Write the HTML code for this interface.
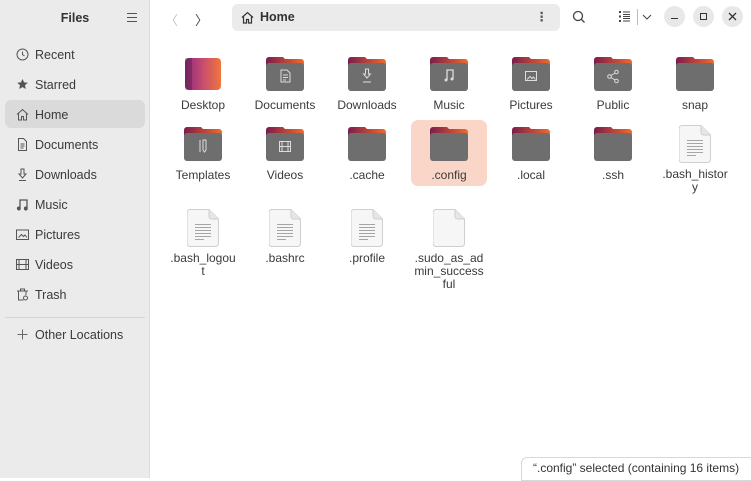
<!DOCTYPE html>
<html><head><meta charset="utf-8"><style>
*{margin:0;padding:0;box-sizing:border-box}
body{width:751px;height:478px;overflow:hidden;font-family:"Liberation Sans","DejaVu Sans",sans-serif;background:#fff;color:#333;position:relative}
.side{position:absolute;left:0;top:0;width:150px;height:478px;background:#ebebeb;border-right:1px solid #dcdcdc}
.title{position:absolute;top:11px;left:0;width:150px;text-align:center;font-weight:bold;font-size:12.5px;color:#333}
.ham{position:absolute;left:127px;top:13px;width:10px}
.ham i{display:block;height:1px;background:#555;margin-bottom:3px}
.it{position:absolute;left:5px;width:140px;height:28px;font-size:12.5px;line-height:30px;padding-left:30px;color:#3a3a3a}
.it svg{position:absolute;left:11px;top:8px}
.sel{background:#dadada;border-radius:6px}
.sep{position:absolute;left:5px;width:140px;top:317px;height:1px;background:#d6d6d6}
.main{position:absolute;left:150px;top:0;right:0;bottom:0}
.path{position:absolute;left:232px;top:4px;width:328px;height:27px;background:#ebebeb;border-radius:6px;font-weight:bold;font-size:12.5px;line-height:27px;padding-left:28px}
.ic{position:absolute;width:82px;text-align:center;font-size:12px;line-height:13px;color:#3a3a3a}
.ic svg{display:block;margin:0 auto 8px}
.wb{position:absolute;top:6px;width:21px;height:21px;border-radius:50%;background:#e8e8e8}
.status{position:absolute;left:521px;top:457px;width:232px;height:24px;border:1px solid #d8d8d8;border-radius:6px 0 0 0;background:#fff;font-size:12px;line-height:21px;padding-left:11px}
</style></head><body>
<svg width="0" height="0" style="position:absolute"><defs>
<linearGradient id="g" x1="0" x2="1"><stop offset="0" stop-color="#7b1c4c"/><stop offset="1" stop-color="#ef6a2c"/></linearGradient>
<linearGradient id="d" x1="0" x2="1"><stop offset="0" stop-color="#8d2a7a"/><stop offset=".5" stop-color="#c74d70"/><stop offset="1" stop-color="#f0763c"/></linearGradient>
<symbol id="fo" viewBox="0 0 38 34"><path d="M3 0h14l2 2h16a3 3 0 0 1 3 3v8H0V3a3 3 0 0 1 3-3z" fill="url(#g)"/><rect x="0" y="6" width="38" height="28" rx="3" fill="#6e6e6e"/></symbol>
<symbol id="fi" viewBox="0 0 32 38"><path d="M3 .5h19l9.5 9.5v24.5a3 3 0 0 1-3 3h-25.5a3 3 0 0 1-3-3v-31a3 3 0 0 1 3-3z" fill="#f6f6f6" stroke="#cfcfcf"/><path d="M22 .5v7a2.5 2.5 0 0 0 2.5 2.5h7" fill="#e6e6e6" stroke="#cfcfcf"/></symbol>
<symbol id="ln" viewBox="0 0 32 38"><g stroke="#a5a5a5" stroke-width="1"><path d="M8 15.5h16M8 18.5h16M8 21.5h16M8 24.5h16M8 27.5h16M8 30.5h9"/></g></symbol>
</defs></svg>

<div class="side">
<div class="title">Files</div>
<div class="ham"><i></i><i></i><i></i></div>
<div class="it" style="top:40px"><svg width="13" height="13" viewBox="0 0 13 13" fill="none" stroke="#555"><circle cx="6.5" cy="6.5" r="5.5"/><path d="M6.5 3.5v3l2 1.5"/></svg>Recent</div>
<div class="it" style="top:70px"><svg width="13" height="13" viewBox="0 0 13 13"><path d="M6.5 1l1.6 3.4 3.7.4-2.8 2.5.8 3.7-3.3-1.9-3.3 1.9.8-3.7L1.2 4.8l3.7-.4z" fill="#555"/></svg>Starred</div>
<div class="it sel" style="top:100px"><svg width="13" height="13" viewBox="0 0 13 13" fill="none" stroke="#555"><path d="M1 6.5L6.5 1.5 12 6.5M2.5 5.5v6.5h3v-3.5h2v3.5h3V5.5"/></svg>Home</div>
<div class="it" style="top:130px"><svg width="13" height="13" viewBox="0 0 13 13" fill="none" stroke="#555"><path d="M2.5 .5h5l3 3v9h-8z M4.5 6h4M4.5 8h4M4.5 10h3"/></svg>Documents</div>
<div class="it" style="top:160px"><svg width="13" height="13" viewBox="0 0 13 13" fill="none" stroke="#555"><path d="M5 1h3v5h2l-3.5 4-3.5-4h2zM3 12.5h7"/></svg>Downloads</div>
<div class="it" style="top:190px"><svg width="13" height="13" viewBox="0 0 13 13" fill="none" stroke="#555" stroke-width="1.3"><path d="M4 10V2h7v8"/><circle cx="2.8" cy="10.5" r="1.3" fill="#555"/><circle cx="9.8" cy="10.5" r="1.3" fill="#555"/></svg>Music</div>
<div class="it" style="top:220px"><svg width="13" height="13" viewBox="0 0 13 13" fill="none" stroke="#555"><rect x=".5" y="2" width="12" height="9.5"/><path d="M2.5 9.5l3-3 2 2 1.5-1.5 2 2.5" /></svg>Pictures</div>
<div class="it" style="top:250px"><svg width="13" height="13" viewBox="0 0 13 13" fill="none" stroke="#555"><rect x=".5" y="1.5" width="12" height="10"/><path d="M3 1.5v10M10 1.5v10M.5 6.5h12"/></svg>Videos</div>
<div class="it" style="top:280px"><svg width="13" height="13" viewBox="0 0 13 13" fill="none" stroke="#555"><path d="M1 3h11M4.5 3V1h4v2M2.5 3v9h5M10 3v4"/><circle cx="9.5" cy="10" r="2"/></svg>Trash</div>
<div class="sep"></div>
<div class="it" style="top:320px"><svg width="13" height="13" viewBox="0 0 13 13" fill="none" stroke="#666"><path d="M6.5 1.5v10M1.5 6.5h10"/></svg>Other Locations</div>
</div>

<div class="main">
<div style="position:absolute;left:15px;top:10px;color:#c4c4c4;font-size:13px">〈</div>
<div style="position:absolute;left:45px;top:10px;color:#444;font-size:13px">〉</div>
</div>
<div class="path"><svg style="position:absolute;left:9px;top:7px" width="13" height="13" viewBox="0 0 13 13" fill="none" stroke="#333" stroke-width="1.2"><path d="M1 6.5L6.5 1.5 12 6.5M2.5 5.5v6.5h3v-3.5h2v3.5h3V5.5"/></svg>Home
<span style="position:absolute;right:12px;top:0;font-weight:bold;color:#555">⋮</span></div>
<svg style="position:absolute;left:572px;top:10px" width="14" height="14" viewBox="0 0 14 14" fill="none" stroke="#444" stroke-width="1.3"><circle cx="6" cy="6" r="4.5"/><path d="M9.5 9.5l3 3"/></svg>
<svg style="position:absolute;left:619px;top:11px" width="12" height="11" viewBox="0 0 12 11" fill="#444"><rect x="0" y="0" width="2" height="2"/><rect x="0" y="4.5" width="2" height="2"/><rect x="0" y="9" width="2" height="2"/><rect x="4" y=".5" width="7" height="1"/><rect x="4" y="3" width="7" height="1"/><rect x="4" y="5" width="7" height="1"/><rect x="4" y="7" width="7" height="1"/><rect x="4" y="9.5" width="7" height="1"/></svg>
<div style="position:absolute;left:637px;top:9px;width:1px;height:16px;background:#bbb"></div>
<svg style="position:absolute;left:642px;top:14px" width="10" height="6" viewBox="0 0 10 6" fill="none" stroke="#444"><path d="M1 1l4 4 4-4"/></svg>
<div class="wb" style="left:664px"><div style="position:absolute;left:7px;top:12px;width:7px;height:1px;background:#333"></div></div>
<div class="wb" style="left:693px"><div style="position:absolute;left:7px;top:7px;width:7px;height:7px;border:1px solid #333"></div></div>
<div class="wb" style="left:722px"><svg style="position:absolute;left:6px;top:6px" width="9" height="9" viewBox="0 0 9 9" stroke="#333" stroke-width="1.3"><path d="M1 1l7 7M8 1L1 8"/></svg></div>

<div style="position:absolute;left:411px;top:120px;width:76px;height:66px;background:#f9d6c8;border-radius:7px"></div>

<div class="ic" style="left:162px;top:57px"><svg width="38" height="34" viewBox="0 0 38 34"><rect x="1" y="1" width="36" height="32" rx="4" fill="url(#d)"/><rect x="1" y="1" width="7" height="32" fill="#000" opacity=".18"/></svg>Desktop</div>
<div class="ic" style="left:244px;top:57px"><svg width="38" height="34"><use href="#fo"/><path d="M15 13h6l3 3v9h-9z M17 18h5M17 20.5h5M17 23h3" fill="none" stroke="#ddd"/></svg>Documents</div>
<div class="ic" style="left:326px;top:57px"><svg width="38" height="34"><use href="#fo"/><path d="M17.5 12h3v5h2l-3.5 4-3.5-4h2zM15 25h8" fill="none" stroke="#ddd"/></svg>Downloads</div>
<div class="ic" style="left:408px;top:57px"><svg width="38" height="34"><use href="#fo"/><path d="M17 23V13h6v9" fill="none" stroke="#ddd" stroke-width="1.3"/><circle cx="16" cy="23" r="1.5" fill="#ddd"/><circle cx="22" cy="22" r="1.5" fill="#ddd"/></svg>Music</div>
<div class="ic" style="left:490px;top:57px"><svg width="38" height="34"><use href="#fo"/><rect x="13.5" y="14.5" width="11" height="9" fill="none" stroke="#ddd"/><path d="M15 22.5l3-3 2 2 1.5-1.5 2 2.5" fill="none" stroke="#ddd"/></svg>Pictures</div>
<div class="ic" style="left:572px;top:57px"><svg width="38" height="34"><use href="#fo"/><g fill="none" stroke="#ddd"><circle cx="15.5" cy="19.5" r="1.8"/><circle cx="22.5" cy="15" r="1.8"/><circle cx="22.5" cy="24" r="1.8"/><path d="M17 18.5l4-2.5M17 20.5l4 2.5"/></g></svg>Public</div>
<div class="ic" style="left:654px;top:57px"><svg width="38" height="34"><use href="#fo"/></svg>snap</div>

<div class="ic" style="left:162px;top:127px"><svg width="38" height="34"><use href="#fo"/><path d="M16 13v12M19 13h3v10l-1.5 2-1.5-2z" fill="none" stroke="#ddd"/></svg>Templates</div>
<div class="ic" style="left:244px;top:127px"><svg width="38" height="34"><use href="#fo"/><g fill="none" stroke="#ddd"><rect x="13.5" y="14.5" width="11" height="10"/><path d="M16 14.5v10M22 14.5v10M13.5 19.5h11"/></g></svg>Videos</div>
<div class="ic" style="left:326px;top:127px"><svg width="38" height="34"><use href="#fo"/></svg>.cache</div>
<div class="ic" style="left:408px;top:127px"><svg width="38" height="34"><use href="#fo"/></svg>.config</div>
<div class="ic" style="left:490px;top:127px"><svg width="38" height="34"><use href="#fo"/></svg>.local</div>
<div class="ic" style="left:572px;top:127px"><svg width="38" height="34"><use href="#fo"/></svg>.ssh</div>
<div class="ic" style="left:654px;top:125px"><svg width="32" height="38" style="margin-bottom:5px"><use href="#fi"/><use href="#ln"/></svg>.bash_histor<br>y</div>

<div class="ic" style="left:162px;top:209px"><svg width="32" height="38" style="margin-bottom:5px"><use href="#fi"/><use href="#ln"/></svg>.bash_logou<br>t</div>
<div class="ic" style="left:244px;top:209px"><svg width="32" height="38" style="margin-bottom:5px"><use href="#fi"/><use href="#ln"/></svg>.bashrc</div>
<div class="ic" style="left:326px;top:209px"><svg width="32" height="38" style="margin-bottom:5px"><use href="#fi"/><use href="#ln"/></svg>.profile</div>
<div class="ic" style="left:408px;top:209px"><svg width="32" height="38" style="margin-bottom:5px"><use href="#fi"/></svg>.sudo_as_ad<br>min_success<br>ful</div>

<div class="status">“.config” selected  (containing 16 items)</div>
</body></html>
